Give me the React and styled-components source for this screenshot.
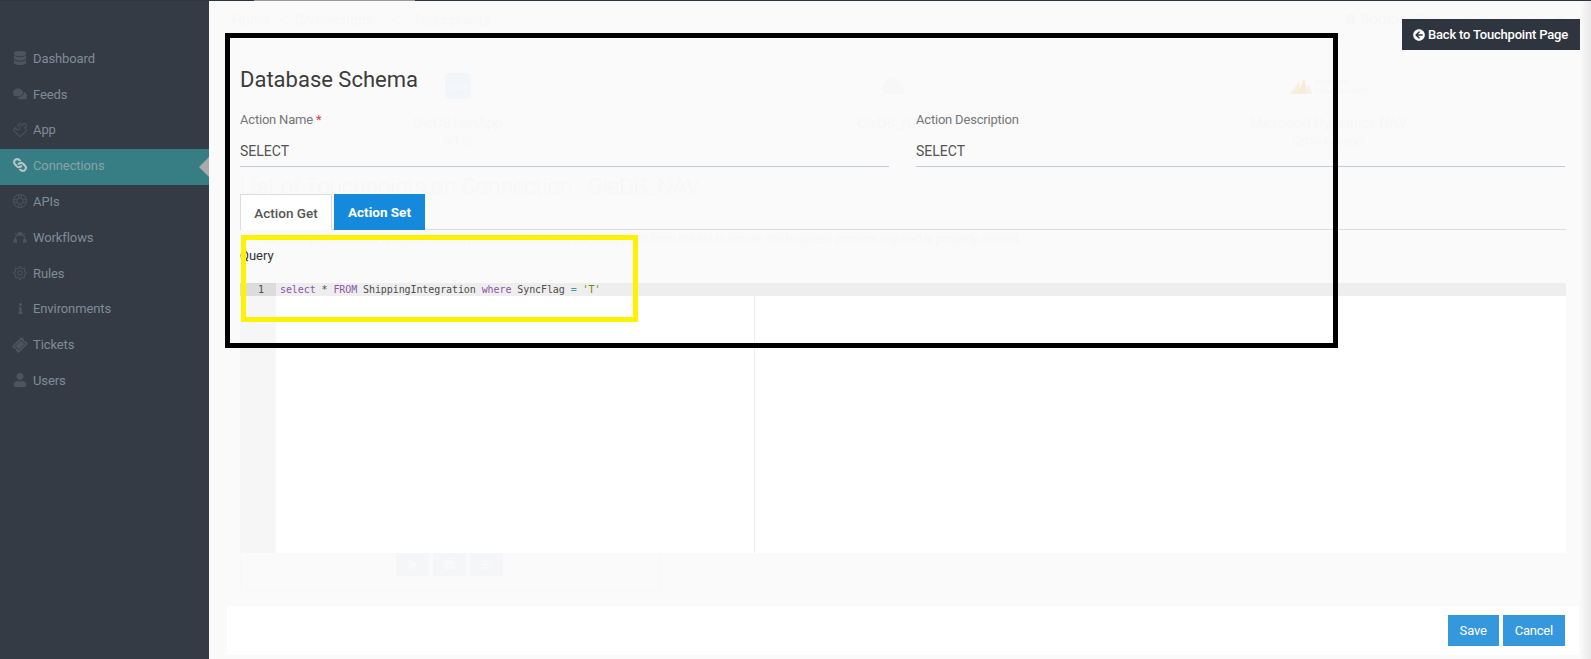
import React from "react";
import styled, { createGlobalStyle } from "styled-components";
import {
  FaDatabase,
  FaComments,
  FaLink,
  FaInfo,
  FaTicketAlt,
  FaUser,
  FaArrowCircleLeft,
  FaBookmark,
  FaPlay,
  FaBriefcase,
  FaBars,
  FaCloud,
  FaChevronDown,
  FaRegBell,
  FaRegCircle,
  FaTimes,
} from "react-icons/fa";
import { SlPuzzle, SlSupport, SlSettings } from "react-icons/sl";

const GlobalStyle = createGlobalStyle`
  html, body {
    margin: 0;
    height: 100%;
    overflow: hidden;
    background: #fafafa;
    font-family: Roboto, "Liberation Sans", sans-serif;
  }
  * {
    box-sizing: border-box;
  }
`;

const BezierIcon = () => (
  <svg width="16" height="13" viewBox="0 0 16 13" fill="none" stroke="currentColor">
    <path d="M2.5 10C2.5 5 5 2.500 8 2.500S13.500 5 13.500 10" strokeWidth="1.200" />
    <path d="M1 2.500H15" strokeWidth="1" />
    <rect x="1" y="9" width="3" height="3" fill="currentColor" />
    <rect x="12" y="9" width="3" height="3" fill="currentColor" />
    <rect x="6.500" y="1" width="3" height="3" fill="currentColor" />
  </svg>
);

const DynamicsMark = () => (
  <svg width="22" height="16" viewBox="0 0 22 16">
    <polygon points="0,16 9,3 11,16" fill="#f6f0e0" />
    <polygon points="8,16 14,0 18,16" fill="#f7ecd6" />
    <polygon points="15,16 19,6 22,16" fill="#f6f1e6" />
  </svg>
);

const navItems = [
  { label: "Dashboard", icon: <FaDatabase /> },
  { label: "Feeds", icon: <FaComments /> },
  { label: "App", icon: <SlPuzzle /> },
  { label: "Connections", icon: <FaLink style={{ transform: "rotate(90deg)" }} />, active: true },
  { label: "APIs", icon: <SlSupport /> },
  { label: "Workflows", icon: <BezierIcon /> },
  { label: "Rules", icon: <SlSettings /> },
  { label: "Environments", icon: <FaInfo size={11} /> },
  { label: "Tickets", icon: <FaTicketAlt style={{ transform: "rotate(-45deg)" }} /> },
  { label: "Users", icon: <FaUser /> },
];

const cards = [
  { name: "OleDBTestApp", version: "(V1.0)", logo: "db" },
  { name: "OleDB_NAV", version: "", logo: "cloud" },
  { name: "Microsoft Dynamics NAV", version: "(2016-Generic)", logo: "brand" },
];

const CardLogo = ({ kind }) => {
  if (kind === "db") return <DbLogo>OLEDB</DbLogo>;
  if (kind === "cloud") return <FaCloud size={22} />;
  return (
    <BrandLogo>
      <DynamicsMark />
      <BrandText>
        Microsoft
        <br />
        Dynamics NAV
      </BrandText>
    </BrandLogo>
  );
};

const App = () => {
  return (
    <>
      <GlobalStyle />
      <Shell>
        <Sidebar>
          {navItems.map((item) => (
            <NavItem key={item.label} $active={item.active}>
              <NavIcon $active={item.active}>{item.icon}</NavIcon>
              {item.label}
              {item.active && <ActiveArrow />}
            </NavItem>
          ))}
        </Sidebar>

        <Main>
          <LoadingBar />
          <Topbar>
            <Crumbs>
              <span>Home</span>
              <CrumbArrow $before={8} $after={10}>
                <FaChevronDown size={7} />
              </CrumbArrow>
              <span>Connections</span>
              <CrumbArrow $before={17} $after={16}>
                <FaChevronDown size={7} />
              </CrumbArrow>
              <span>Touchpoints</span>
            </Crumbs>
            <TopRight>
              <FaBookmark size={11} />
              <BookmarkText>BOOKMARKS</BookmarkText>
              <TopIcons>
                <FaRegCircle size={14} />
                <FaRegBell size={14} />
                <FaRegCircle size={14} />
                <FaTimes size={14} />
              </TopIcons>
            </TopRight>
          </Topbar>

          <CardRow>
            {cards.map((card) => (
              <FlowCard key={card.name}>
                <LogoSlot>
                  <CardLogo kind={card.logo} />
                </LogoSlot>
                <CardName>{card.name}</CardName>
                <CardVersion>{card.version}</CardVersion>
              </FlowCard>
            ))}
          </CardRow>

          <PageTitle>List of Touchpoints on Connection : OleDB_NAV</PageTitle>
          <PageNote>
            The touchpoint forms a unique business process. Customize the touchpoint from the list to
            ensure the business process required is properly defined.
          </PageNote>

          <ActionArea>
            <ActionPanel>
              <GhostButton>
                <FaPlay size={10} />
              </GhostButton>
              <GhostButton>
                <FaBriefcase size={11} />
              </GhostButton>
              <GhostButton>
                <FaBars size={11} />
              </GhostButton>
            </ActionPanel>
          </ActionArea>
        </Main>

        <Modal>
          <ModalBody>
            <Heading>Database Schema</Heading>
            <FieldRow>
              <Field>
                <FieldLabel>
                  Action Name <Required>*</Required>
                </FieldLabel>
                <FieldValue>SELECT</FieldValue>
              </Field>
              <Field>
                <FieldLabel>Action Description</FieldLabel>
                <FieldValue>SELECT</FieldValue>
              </Field>
            </FieldRow>

            <Tabs>
              <Tab $selected>Action Get</Tab>
              <Tab>Action Set</Tab>
            </Tabs>

            <QueryLabel>Query</QueryLabel>
            <Editor>
              <Gutter>
                <GutterCell>1</GutterCell>
              </Gutter>
              <CodePane>
                <CodeLine>
                  <Keyword>select</Keyword> * <Keyword>FROM</Keyword> ShippingIntegration{" "}
                  <Keyword>where</Keyword> SyncFlag <Operator>=</Operator> <Str>'T'</Str>
                </CodeLine>
                <PrintMargin />
              </CodePane>
            </Editor>
          </ModalBody>

          <ModalFooter>
            <FooterButton>Save</FooterButton>
            <FooterButton>Cancel</FooterButton>
          </ModalFooter>
        </Modal>

        <BackButton>
          <FaArrowCircleLeft size={12} />
          Back to Touchpoint Page
        </BackButton>

        <BlackMark />
        <YellowMark />
        <ScrollEdge />
      </Shell>
    </>
  );
};

export default App;

const Shell = styled.div`
  position: relative;
  display: grid;
  grid-template-columns: 209px 1fr;
  width: 1591px;
  height: 659px;
  overflow: hidden;
`;

const Sidebar = styled.nav`
  background: #353b44;
  padding-top: 39.400px;
  border-top: 1px solid #2f353f;
`;

const NavItem = styled.div`
  position: relative;
  display: flex;
  align-items: center;
  height: 35.800px;
  padding-left: 13px;
  padding-bottom: ${(p) => (p.$active ? "3px" : "0")};
  margin-top: ${(p) => (p.$active ? "1.200px" : "0")};
  margin-bottom: ${(p) => (p.$active ? "-1.200px" : "0")};
  font-size: 13px;
  letter-spacing: -0.1px;
  color: ${(p) => (p.$active ? "#8aa3a6" : "#7f8b98")};
  background: ${(p) => (p.$active ? "#367d84" : "transparent")};
`;

const NavIcon = styled.span`
  display: flex;
  justify-content: center;
  width: 14px;
  margin-right: 6px;
  font-size: 14px;
  color: ${(p) => (p.$active ? "#b4c4c5" : "#4d545e")};
`;

const ActiveArrow = styled.i`
  position: absolute;
  right: 0;
  top: 8px;
  border-style: solid;
  border-width: 10px 10px 10px 0;
  border-color: transparent #aaaaaa transparent transparent;
`;

const Main = styled.main`
  position: relative;
  display: flex;
  flex-direction: column;
  min-width: 0;
  border-top: 1px solid #2f353f;
  color: #f7f7f7;
`;

const LoadingBar = styled.div`
  position: absolute;
  top: -1px;
  left: 45px;
  width: 161px;
  height: 1px;
  background: #999999;
`;

const Topbar = styled.header`
  display: flex;
  align-items: center;
  justify-content: space-between;
  height: 42px;
  padding: 0 24px 4px 23px;
  border-bottom: 1px solid #f8f8f8;
`;

const Crumbs = styled.div`
  display: flex;
  align-items: center;
  font-size: 14px;
`;

const CrumbArrow = styled.span`
  display: flex;
  margin-left: ${(p) => p.$before}px;
  margin-right: ${(p) => p.$after}px;
`;

const TopRight = styled.div`
  display: flex;
  align-items: center;
`;

const BookmarkText = styled.span`
  margin-left: 5px;
  font-size: 13px;
`;

const TopIcons = styled.div`
  display: flex;
  gap: 14px;
  margin-left: 30px;
`;

const CardRow = styled.section`
  display: grid;
  grid-template-columns: repeat(3, 435.500px);
  padding: 25px 0 0 31px;
`;

const FlowCard = styled.div`
  display: flex;
  flex-direction: column;
  align-items: center;
`;

const LogoSlot = styled.div`
  display: flex;
  align-items: center;
  justify-content: center;
  height: 36px;
`;

const DbLogo = styled.div`
  display: flex;
  align-items: center;
  justify-content: center;
  width: 26px;
  height: 26px;
  border-radius: 5px;
  font-size: 6px;
  color: #fafafa;
  background: #f2f6fa;
`;

const BrandLogo = styled.div`
  display: flex;
  align-items: center;
  gap: 2px;
`;

const BrandText = styled.div`
  font-size: 8px;
  line-height: 9px;
`;

const CardName = styled.div`
  margin-top: 11px;
  font-size: 14px;
  line-height: 16px;
`;

const CardVersion = styled.div`
  height: 16px;
  margin-top: 4px;
  font-size: 11px;
`;

const PageTitle = styled.h1`
  margin: 22px 0 0 31px;
  font-size: 22.200px;
  line-height: 26px;
  font-weight: 300;
`;

const PageNote = styled.p`
  margin: 33px 0 0 49px;
  font-size: 12px;
  line-height: 14px;
  letter-spacing: -0.18px;
`;

const ActionArea = styled.div`
  display: flex;
  margin: 307px 0 0 31px;
`;

const ActionPanel = styled.div`
  display: flex;
  gap: 4px;
  width: 420px;
  height: 39px;
  padding-left: 155px;
  border: 1px solid #f8f8f8;
  border-top: 0;
`;

const GhostButton = styled.div`
  display: flex;
  align-items: center;
  justify-content: center;
  width: 33px;
  height: 23px;
  background: #f5f6f8;
  color: #fafafa;
`;

const Modal = styled.section`
  position: absolute;
  top: 38px;
  left: 227px;
  right: 12px;
  bottom: 4px;
  display: flex;
  flex-direction: column;
`;

const ModalBody = styled.div`
  flex: 1;
  padding: 0 13px 0 13px;
`;

const Heading = styled.h2`
  margin: 29px 0 0;
  font-size: 22px;
  line-height: 26px;
  font-weight: 400;
  color: #3c3c3c;
`;

const FieldRow = styled.div`
  display: grid;
  grid-template-columns: 649px 649px;
  gap: 27px;
  margin-top: 19px;
`;

const Field = styled.div`
  color: #555555;
`;

const FieldLabel = styled.div`
  font-size: 13px;
  line-height: 16px;
  letter-spacing: -0.2px;
  color: #777777;
`;

const Required = styled.span`
  color: #e73d4a;
`;

const FieldValue = styled.div`
  height: 31px;
  padding-top: 7px;
  margin-top: 8px;
  border-bottom: 1px solid #c2cad8;
  font-size: 14px;
  line-height: 16px;
`;

const Tabs = styled.div`
  display: flex;
  gap: 2px;
  height: 36px;
  margin-top: 27px;
  border-bottom: 1px solid #dddddd;
`;

const Tab = styled.div`
  display: flex;
  align-items: center;
  justify-content: center;
  width: ${(p) => (p.$selected ? "92px" : "91px")};
  height: 36px;
  font-size: 13.500px;
  font-weight: ${(p) => (p.$selected ? 500 : 700)};
  color: ${(p) => (p.$selected ? "#555555" : "#ffffff")};
  background: ${(p) => (p.$selected ? "#ffffff" : "#1589dc")};
  border: ${(p) => (p.$selected ? "1px solid #dddddd" : "0")};
  border-bottom: 0;
`;

const QueryLabel = styled.div`
  margin-top: 18px;
  font-size: 13px;
  line-height: 16px;
  color: #333333;
`;

const Editor = styled.div`
  display: flex;
  height: 270px;
  margin-top: 19px;
  background: #ffffff;
`;

const Gutter = styled.div`
  width: 36px;
  background: #f6f6f6;
`;

const GutterCell = styled.div`
  height: 13px;
  padding-right: 12px;
  text-align: right;
  font-family: "DejaVu Sans Mono", monospace;
  font-size: 10px;
  line-height: 13px;
  color: #4d4d4c;
  background: #dcdcdc;
`;

const CodePane = styled.div`
  position: relative;
  flex: 1;
`;

const CodeLine = styled.div`
  height: 13px;
  padding-left: 4px;
  font-family: "DejaVu Sans Mono", monospace;
  font-size: 10px;
  line-height: 13px;
  letter-spacing: -0.09px;
  white-space: pre;
  color: #4d4d4c;
  background: #eeeeee;
`;

const PrintMargin = styled.div`
  position: absolute;
  top: 13px;
  bottom: 0;
  left: 478px;
  width: 1px;
  background: #eeeeee;
`;

const Keyword = styled.span`
  color: #8959a8;
`;

const Operator = styled.span`
  color: #3e999f;
`;

const Str = styled.span`
  color: #718c00;
`;

const ModalFooter = styled.footer`
  display: flex;
  justify-content: flex-end;
  gap: 4px;
  height: 49px;
  padding: 9px 14px 0 0;
  background: #ffffff;
`;

const FooterButton = styled.button`
  height: 31px;
  padding: 0 12px;
  border: 0;
  font-family: inherit;
  font-size: 13px;
  font-weight: 400;
  letter-spacing: -0.2px;
  color: #ffffff;
  background: #3598dc;
`;

const BackButton = styled.div`
  position: absolute;
  top: 19px;
  left: 1402px;
  display: flex;
  align-items: center;
  gap: 3px;
  width: 178px;
  height: 31px;
  padding-left: 11px;
  font-size: 13px;
  font-weight: 500;
  letter-spacing: -0.2px;
  color: #ffffff;
  background: #2f353e;
`;

const BlackMark = styled.div`
  position: absolute;
  top: 33px;
  left: 225px;
  width: 1113px;
  height: 315px;
  border: 5px solid #000000;
  pointer-events: none;
`;

const YellowMark = styled.div`
  position: absolute;
  top: 235px;
  left: 241px;
  width: 397px;
  height: 87px;
  border: 5px solid #fff200;
  pointer-events: none;
`;

const ScrollEdge = styled.div`
  position: absolute;
  top: 1px;
  right: 0;
  bottom: 0;
  width: 11px;
  background: linear-gradient(to right, #fafafa, #e9e9e9);
`;
